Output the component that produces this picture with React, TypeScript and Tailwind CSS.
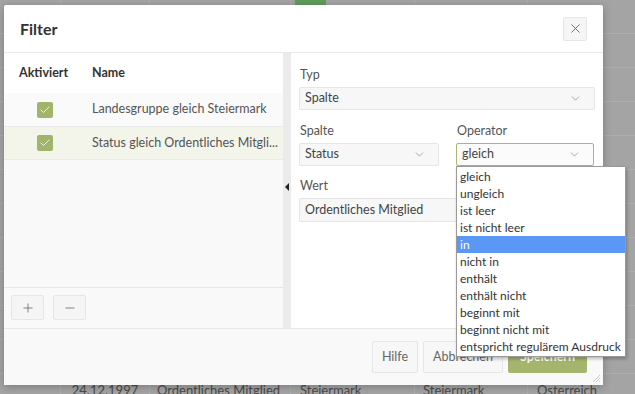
import React from 'react';
import { ChevronDown, X, Plus, Minus, Check } from 'lucide-react';

const operators = [
  'gleich',
  'ungleich',
  'ist leer',
  'ist nicht leer',
  'in',
  'nicht in',
  'enthält',
  'enthält nicht',
  'beginnt mit',
  'beginnt nicht mit',
  'entspricht regulärem Ausdruck',
];

const rules = [
  { id: 1, name: 'Landesgruppe gleich Steiermark', selected: false },
  { id: 2, name: 'Status gleich Ordentliches Mitgli...', selected: true },
];

const bgRows = Array.from({ length: 12 });

const font = { fontFamily: 'Lato, "Noto Sans", sans-serif' };

const SelectBox = ({ value, focused }: { value: string; focused?: boolean }) => (
  <div
    className={
      focused
        ? 'flex h-[23px] items-center justify-between rounded-[2px] border border-[#a9b86f] bg-[#fbfbfb] pl-[5px] pr-[12px] text-[12.5px] text-[#444]'
        : 'flex h-[23px] items-center justify-between rounded-[2px] border border-[#e6e6e6] bg-[#f7f7f7] pl-[5px] pr-[12px] text-[12.5px] text-[#444]'
    }
  >
    <span>{value}</span>
    <ChevronDown size={13} strokeWidth={1.3} className="text-[#888]" />
  </div>
);

const CheckBox = () => (
  <div className="flex h-[16px] w-[16px] items-center justify-center rounded-[2px] bg-[#a2b46c]">
    <Check size={12} strokeWidth={1.6} className="text-white" />
  </div>
);

export default function App() {
  return (
    <div className="relative h-[394px] w-[635px] overflow-hidden bg-[#a4a4a4]" style={font}>
      {/* dimmed table behind the dialog */}
      <div className="absolute left-[295px] top-0 h-[5px] w-[31px] bg-[#5f9c5a]" />
      <div className="flex flex-col">
        {bgRows.map((_, i) => (
          <div
            key={i}
            className="grid h-[34px] grid-cols-[61px_89px_141px_124px_113px_107px] border-b border-[#adadad] text-[13px] text-[#4a4a4a]"
          >
            <div className="border-r border-[#adadad]" />
            <div className="flex items-center justify-center border-r border-[#adadad]">24.12.1997</div>
            <div className="flex items-center border-r border-[#adadad] pl-[7px]">Ordentliches Mitglied</div>
            <div className="flex items-center border-r border-[#adadad] pl-[9px]">Steiermark</div>
            <div className="flex items-center border-r border-[#adadad] pl-[8px]">Steiermark</div>
            <div className="flex items-center pl-[9px]">Österreich</div>
          </div>
        ))}
      </div>

      {/* dialog */}
      <div className="absolute left-[4px] top-[5px] flex h-[380px] w-[599px] flex-col rounded-[2px] bg-white shadow-[0_2px_8px_rgba(0,0,0,0.25)]">
        <div className="flex h-[48px] shrink-0 items-center justify-between border-b border-[#e8e8e8] pl-[16px] pr-[16px]">
          <span className="text-[16px] font-bold text-[#333]">Filter</span>
          <button className="flex h-[24px] w-[24px] items-center justify-center rounded-[2px] border border-[#e6e6e6] bg-[#f6f6f6] text-[#555]">
            <X size={15} strokeWidth={1.3} />
          </button>
        </div>

        <div className="flex min-h-0 flex-1">
          {/* rules list */}
          <div className="flex w-[279px] shrink-0 flex-col bg-[#f9f9f9]">
            <div className="flex h-[40px] shrink-0 items-center bg-white text-[12.5px] font-bold text-[#333] shadow-[0_2px_3px_rgba(0,0,0,0.06)]">
              <div className="w-[88px] pl-[15px]">Aktiviert</div>
              <div>Name</div>
            </div>
            {rules.map((r) => (
              <div
                key={r.id}
                className={
                  r.selected
                    ? 'flex h-[33px] items-center border-b border-[#e9e9e9] bg-[#f3f4ea] text-[12.5px] text-[#555]'
                    : 'flex h-[34px] items-center border-b border-[#e9e9e9] bg-[#fafafa] text-[12.5px] text-[#555]'
                }
              >
                <div className="flex w-[88px] shrink-0 justify-center pr-[6px]">
                  <CheckBox />
                </div>
                <div className="whitespace-nowrap">{r.name}</div>
              </div>
            ))}
            <div className="flex-1" />
            <div className="flex h-[41px] shrink-0 items-start gap-[9px] border-t border-[#e6e6e6] pl-[7px] pt-[7px]">
              <button className="flex h-[25px] w-[33px] items-center justify-center rounded-[2px] border border-[#e6e6e6] bg-[#f5f5f5] text-[#555]">
                <Plus size={14} strokeWidth={1.2} />
              </button>
              <button className="flex h-[25px] w-[33px] items-center justify-center rounded-[2px] border border-[#e6e6e6] bg-[#f5f5f5] text-[#555]">
                <Minus size={14} strokeWidth={1.2} />
              </button>
            </div>
          </div>

          {/* splitter */}
          <div className="flex w-[8px] shrink-0 flex-col items-center bg-[#ebebeb] pt-[130px]">
            <svg width="4" height="8" viewBox="0 0 4 8">
              <path d="M4 0 L0 4 L4 8 Z" fill="#222" />
            </svg>
          </div>

          {/* rule editor */}
          <div className="flex min-w-0 flex-1 flex-col bg-white pl-[8px] pr-[8px] pt-[13px] text-[12.5px] text-[#555]">
            <div className="mb-[3px] h-[18px] pl-[1px]">Typ</div>
            <SelectBox value="Spalte" />
            <div className="mt-[12px] grid grid-cols-[140px_138px] gap-x-[17px]">
              <div>
                <div className="mb-[3px] h-[18px] pl-[1px]">Spalte</div>
                <SelectBox value="Status" />
              </div>
              <div className="relative">
                <div className="mb-[3px] h-[18px] pl-[1px]">Operator</div>
                <SelectBox value="gleich" focused />
                <div className="absolute left-0 top-full z-10 w-[170px] border border-[#9a9a9a] bg-white py-px text-[12px] text-[#333] shadow-[1px_2px_3px_rgba(0,0,0,0.25)]">
                  {operators.map((op) => (
                    <div
                      key={op}
                      className={
                        op === 'in'
                          ? 'flex h-[17px] items-center whitespace-nowrap bg-[#5b97f5] pl-[3px] text-white'
                          : 'flex h-[17px] items-center whitespace-nowrap pl-[3px]'
                      }
                    >
                      {op}
                    </div>
                  ))}
                </div>
              </div>
            </div>
            <div className="mb-[3px] mt-[11px] h-[18px] pl-[1px]">Wert</div>
            <div className="flex h-[24px] w-full items-center rounded-[2px] border border-[#e6e6e6] bg-[#f7f7f7] pl-[5px] text-[12.5px] text-[#444]">
              Ordentliches Mitglied
            </div>
          </div>
        </div>

        <div className="relative flex h-[57px] shrink-0 items-center justify-end gap-[5px] border-t border-[#e6e6e6] bg-[#f9f9f9] pr-[16px] text-[12.5px]">
          <button className="h-[32px] w-[46px] rounded-[2px] border border-[#e6e6e6] bg-[#f7f7f7] text-[#666]">Hilfe</button>
          <button className="h-[32px] w-[80px] rounded-[2px] border border-[#e6e6e6] bg-[#f7f7f7] text-[#666]">Abbrechen</button>
          <button className="h-[32px] w-[79px] rounded-[2px] bg-[#a5b56d] font-bold text-white">Speichern</button>
          <svg className="absolute bottom-[3px] right-[3px]" width="8" height="8" viewBox="0 0 8 8">
            <path d="M8 1 L1 8 M8 4 L4 8 M8 7 L7 8" stroke="#c8c8c8" strokeWidth="1" />
          </svg>
        </div>
      </div>
    </div>
  );
}
